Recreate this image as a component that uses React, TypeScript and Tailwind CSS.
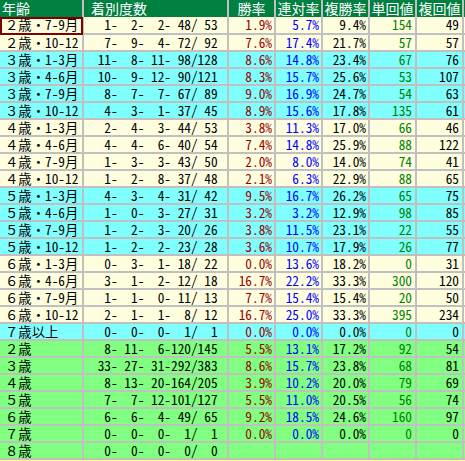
const cols = "grid grid-cols-[82px_143px_45px_45px_45px_45px_45px_40px] gap-x-[2px]";

type Row = {
  label: string;
  counts: number[];
  win?: string;
  ren?: string;
  fuku?: string;
  tan?: string;
  fret?: string;
  bg: string;
};

const cream = "bg-[#ffffe0]";
const cyan = "bg-[#80ffff]";
const green = "bg-[#80ff80]";

const rows: Row[] = [
  { label: "２歳・7-9月", counts: [1, 2, 2, 48, 53], win: "1.9%", ren: "5.7%", fuku: "9.4%", tan: "154", fret: "49", bg: cream },
  { label: "２歳・10-12", counts: [7, 9, 4, 72, 92], win: "7.6%", ren: "17.4%", fuku: "21.7%", tan: "57", fret: "57", bg: cream },
  { label: "３歳・1-3月", counts: [11, 8, 11, 98, 128], win: "8.6%", ren: "14.8%", fuku: "23.4%", tan: "67", fret: "76", bg: cyan },
  { label: "３歳・4-6月", counts: [10, 9, 12, 90, 121], win: "8.3%", ren: "15.7%", fuku: "25.6%", tan: "53", fret: "107", bg: cyan },
  { label: "３歳・7-9月", counts: [8, 7, 7, 67, 89], win: "9.0%", ren: "16.9%", fuku: "24.7%", tan: "54", fret: "63", bg: cyan },
  { label: "３歳・10-12", counts: [4, 3, 1, 37, 45], win: "8.9%", ren: "15.6%", fuku: "17.8%", tan: "135", fret: "61", bg: cyan },
  { label: "４歳・1-3月", counts: [2, 4, 3, 44, 53], win: "3.8%", ren: "11.3%", fuku: "17.0%", tan: "66", fret: "46", bg: cream },
  { label: "４歳・4-6月", counts: [4, 4, 6, 40, 54], win: "7.4%", ren: "14.8%", fuku: "25.9%", tan: "88", fret: "122", bg: cream },
  { label: "４歳・7-9月", counts: [1, 3, 3, 43, 50], win: "2.0%", ren: "8.0%", fuku: "14.0%", tan: "74", fret: "41", bg: cream },
  { label: "４歳・10-12", counts: [1, 2, 8, 37, 48], win: "2.1%", ren: "6.3%", fuku: "22.9%", tan: "88", fret: "65", bg: cream },
  { label: "５歳・1-3月", counts: [4, 3, 4, 31, 42], win: "9.5%", ren: "16.7%", fuku: "26.2%", tan: "65", fret: "75", bg: cyan },
  { label: "５歳・4-6月", counts: [1, 0, 3, 27, 31], win: "3.2%", ren: "3.2%", fuku: "12.9%", tan: "98", fret: "85", bg: cyan },
  { label: "５歳・7-9月", counts: [1, 2, 3, 20, 26], win: "3.8%", ren: "11.5%", fuku: "23.1%", tan: "22", fret: "55", bg: cyan },
  { label: "５歳・10-12", counts: [1, 2, 2, 23, 28], win: "3.6%", ren: "10.7%", fuku: "17.9%", tan: "26", fret: "77", bg: cyan },
  { label: "６歳・1-3月", counts: [0, 3, 1, 18, 22], win: "0.0%", ren: "13.6%", fuku: "18.2%", tan: "0", fret: "31", bg: cream },
  { label: "６歳・4-6月", counts: [3, 1, 2, 12, 18], win: "16.7%", ren: "22.2%", fuku: "33.3%", tan: "300", fret: "120", bg: cream },
  { label: "６歳・7-9月", counts: [1, 1, 0, 11, 13], win: "7.7%", ren: "15.4%", fuku: "15.4%", tan: "20", fret: "50", bg: cream },
  { label: "６歳・10-12", counts: [2, 1, 1, 8, 12], win: "16.7%", ren: "25.0%", fuku: "33.3%", tan: "395", fret: "234", bg: cream },
  { label: "７歳以上", counts: [0, 0, 0, 1, 1], win: "0.0%", ren: "0.0%", fuku: "0.0%", tan: "0", fret: "0", bg: cyan },
  { label: "２歳", counts: [8, 11, 6, 120, 145], win: "5.5%", ren: "13.1%", fuku: "17.2%", tan: "92", fret: "54", bg: green },
  { label: "３歳", counts: [33, 27, 31, 292, 383], win: "8.6%", ren: "15.7%", fuku: "23.8%", tan: "68", fret: "81", bg: green },
  { label: "４歳", counts: [8, 13, 20, 164, 205], win: "3.9%", ren: "10.2%", fuku: "20.0%", tan: "79", fret: "69", bg: green },
  { label: "５歳", counts: [7, 7, 12, 101, 127], win: "5.5%", ren: "11.0%", fuku: "20.5%", tan: "56", fret: "74", bg: green },
  { label: "６歳", counts: [6, 6, 4, 49, 65], win: "9.2%", ren: "18.5%", fuku: "24.6%", tan: "160", fret: "97", bg: green },
  { label: "７歳", counts: [0, 0, 0, 1, 1], win: "0.0%", ren: "0.0%", fuku: "0.0%", tan: "0", fret: "0", bg: green },
  { label: "８歳", counts: [0, 0, 0, 0, 0], bg: green },
];

function fmtCounts(c: number[]) {
  const p = (n: number) => String(n).padStart(3, " ");
  return `${p(c[0])}-${p(c[1])}-${p(c[2])}-${p(c[3])}/${p(c[4])}`;
}

const headers = ["勝率", "連対率", "複勝率", "単回値", "複回値"];

export default function App() {
  return (
    <div
      className="h-[461px] w-[465px] overflow-hidden bg-white text-[13.33px] leading-[15px] text-black"
      style={{ fontFamily: '"Noto Sans Mono CJK JP", "Noto Sans CJK JP", "Liberation Mono", monospace' }}
    >
      <div className={`${cols} h-[17px] bg-[#c0c0c0] text-[14px] leading-[17px] text-white`}>
        <div className="bg-[#008040] pl-[2px]">年齢</div>
        <div className="bg-[#008040] pl-[7px]">着別度数</div>
        {headers.map((h) => (
          <div key={h} className="bg-[#008040] text-center">
            {h}
          </div>
        ))}
        <div className="bg-[#008040]" />
      </div>

      <div className="flex flex-col gap-y-[2px] bg-[#c0c0c0] pb-[2px]">
        {rows.map((r, i) => (
          <div key={r.label + i} className={`${cols} ${i === 0 ? "h-[16px] leading-[16px]" : "h-[15px]"}`}>
            <div className={`relative ${r.bg} pl-[5px] whitespace-nowrap`}>
              {r.label}
              {i === 0 && (
                <span className="absolute left-0 top-0 -right-[1px] -bottom-[2px] z-10 border-2 border-[#800000]" />
              )}
            </div>
            <div className={`${r.bg} pl-[7px] whitespace-pre`}>{fmtCounts(r.counts)}</div>
            <div className={`${r.bg} pr-[2px] text-right text-[#990000]`}>{r.win}</div>
            <div className={`${r.bg} pr-[2px] text-right text-[#0000ff]`}>{r.ren}</div>
            <div className={`${r.bg} pr-[2px] text-right`}>{r.fuku}</div>
            <div className={`${r.bg} pr-[3px] text-right text-[#008000]`}>{r.tan}</div>
            <div className={`${r.bg} pr-[3px] text-right`}>{r.fret}</div>
            <div className={r.bg} />
          </div>
        ))}
      </div>
      <div className="h-[2px] bg-[#ffff80]" />
    </div>
  );
}
